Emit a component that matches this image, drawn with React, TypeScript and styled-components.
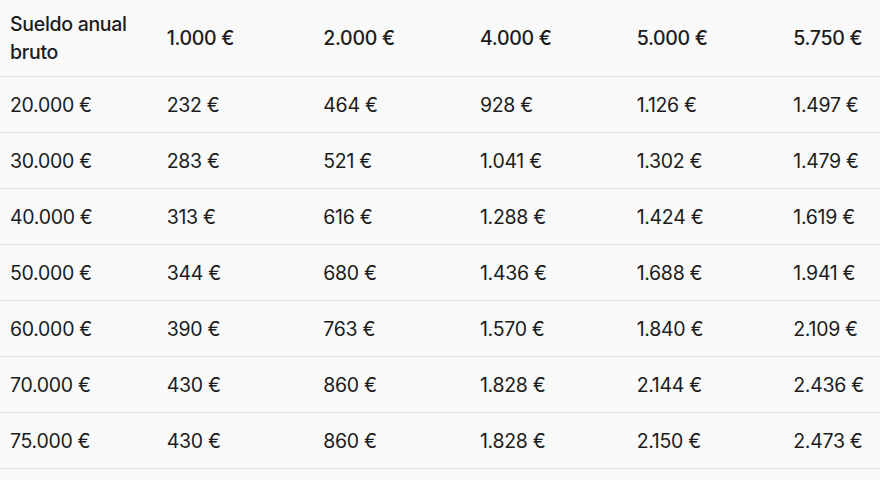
import React from 'react'
import styled, { createGlobalStyle } from 'styled-components'

const GlobalStyle = createGlobalStyle`
  html, body {
    margin: 0;
    padding: 0;
    background: #f9f9f9;
    overflow: hidden;
  }
  body {
    font-family: Inter, "Noto Sans", Arial, sans-serif;
    color: #1c1c1c;
  }
`

const Wrapper = styled.div`
  width: 880px;
  height: 480px;
  overflow: hidden;
  background: #f9f9f9;
`

const Table = styled.table`
  width: 940px;
  table-layout: fixed;
  border-collapse: collapse;
  font-size: 19.5px;
  letter-spacing: -0.3px;
`

const HeadCell = styled.th`
  height: 76px;
  padding: 0 10px;
  text-align: left;
  font-weight: 500;
  line-height: 28px;
  vertical-align: middle;
  border-bottom: 1px solid #dcdcdc;
`

const Cell = styled.td`
  height: 55px;
  padding: 0 10px;
  font-weight: 400;
  vertical-align: middle;
  border-bottom: 1px solid #dcdcdc;
`

const headers = ['1.000 €', '2.000 €', '4.000 €', '5.000 €', '5.750 €']

const rows: string[][] = [
  ['20.000 €', '232 €', '464 €', '928 €', '1.126 €', '1.497 €'],
  ['30.000 €', '283 €', '521 €', '1.041 €', '1.302 €', '1.479 €'],
  ['40.000 €', '313 €', '616 €', '1.288 €', '1.424 €', '1.619 €'],
  ['50.000 €', '344 €', '680 €', '1.436 €', '1.688 €', '1.941 €'],
  ['60.000 €', '390 €', '763 €', '1.570 €', '1.840 €', '2.109 €'],
  ['70.000 €', '430 €', '860 €', '1.828 €', '2.144 €', '2.436 €'],
  ['75.000 €', '430 €', '860 €', '1.828 €', '2.150 €', '2.473 €'],
]

export default function App() {
  return (
    <Wrapper>
      <GlobalStyle />
      <Table>
        <thead>
          <tr>
            <HeadCell>Sueldo anual bruto</HeadCell>
            {headers.map(h => (
              <HeadCell key={h}>{h}</HeadCell>
            ))}
          </tr>
        </thead>
        <tbody>
          {rows.map(r => (
            <tr key={r[0]}>
              {r.map((c, i) => (
                <Cell key={i}>{c}</Cell>
              ))}
            </tr>
          ))}
        </tbody>
      </Table>
    </Wrapper>
  )
}
